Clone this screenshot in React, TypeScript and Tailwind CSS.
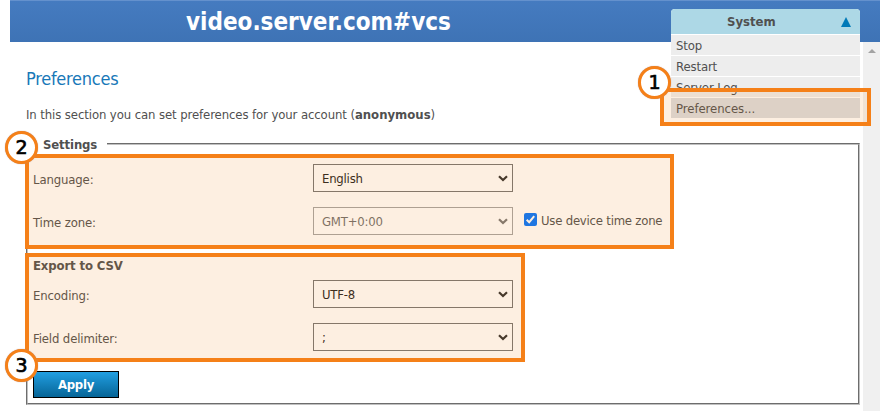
import React from "react";

function Arrow() {
  return (
    <svg className="mr-1 shrink-0" width="10" height="7" viewBox="0 0 10 7" fill="none">
      <path d="M1 1.2 L5 5 L9 1.2" stroke="#2f2f2f" strokeWidth="2.2" />
    </svg>
  );
}

function Select({ value, disabled }: { value: string; disabled?: boolean }) {
  return (
    <div
      className={`flex h-7 w-[200px] items-center justify-between border border-[#767676] bg-white pl-2 text-[#222] ${
        disabled ? "opacity-65" : ""
      }`}
    >
      <span className="pt-px tracking-[-0.22px]">{value}</span>
      <Arrow />
    </div>
  );
}

function Row({ label, children }: { label: string; children: React.ReactNode }) {
  return (
    <div className="flex h-7 items-center">
      <span className="w-[280px] pt-[3px]">{label}</span>
      {children}
    </div>
  );
}

function Badge({ n, place }: { n: string; place: string }) {
  return (
    <div
      className={`absolute flex size-[33px] items-center justify-center rounded-full border-[3px] border-[#f58018] bg-white font-['DejaVu_Sans',sans-serif] text-[19px] leading-none font-normal tracking-normal text-black shadow-[0_0_1px_#a88] [-webkit-text-stroke:0.7px_black] [font-stretch:normal] ${place}`}
    >
      {n}
    </div>
  );
}

const items = ["Stop", "Restart", "Server Log"];

export default function App() {
  return (
    <div className="relative flex h-[411px] w-[880px] flex-col overflow-hidden bg-white pl-[10px] font-['DejaVu_Sans_Condensed','DejaVu_Sans',sans-serif] text-[13px] leading-4 tracking-[-0.13px] text-[#505050] [font-stretch:condensed]">
      <header className="flex h-[42px] shrink-0 items-center border-t border-[#6491cd] bg-linear-to-b from-[#457bc0] to-[#3e73b5] pl-[176px]">
        <h1 className="text-[24px] leading-[42px] font-bold tracking-normal whitespace-nowrap text-white">video.server.com#vcs</h1>
      </header>

      <div className="flex min-h-0 flex-1">
        <main className="w-[853px] pl-4">
          <h2 className="pt-[25px] text-[18px] leading-6 tracking-[-0.25px] text-[#1878b8]">Preferences</h2>
          <p className="pt-4 tracking-[-0.1px] whitespace-nowrap">
            In this section you can set preferences for your account (<b className="tracking-normal">anonymous</b>)
          </p>
          <section className="mt-5 h-[262px] w-[834px] border border-t-[#6d6d6d] border-r-[#c0c0c0] border-b-[#c0c0c0] border-l-[#6d6d6d]">
            <div className="h-full border border-t-[#c0c0c0] border-r-[#6d6d6d] border-b-[#6d6d6d] border-l-[#c0c0c0] pl-[5px]">
              <h3 className="-mt-2 ml-1 h-4 w-[70px] bg-white pl-[6px] leading-4 font-bold">Settings</h3>
              <div className="flex flex-col gap-[15px] pt-[11px]">
                <Row label="Language:">
                  <Select value="English" />
                </Row>
                <Row label="Time zone:">
                  <Select value="GMT+0:00" disabled />
                  <span className="mb-[3px] ml-[11px] flex size-[13px] items-center justify-center rounded-[2px] bg-[#0075ff]">
                    <svg width="13" height="13" viewBox="0 0 13 13" fill="none">
                      <path d="M2.7 6.7 L5.2 9.2 L10.2 3.2" stroke="white" strokeWidth="2" />
                    </svg>
                  </span>
                  <span className="ml-1 tracking-[-0.22px] whitespace-nowrap">Use device time zone</span>
                </Row>
              </div>
              <h4 className="pt-[23px] leading-4 font-bold">Export to CSV</h4>
              <div className="flex flex-col gap-[15px] pt-[6px]">
                <Row label="Encoding:">
                  <Select value="UTF-8" />
                </Row>
                <Row label="Field delimiter:">
                  <Select value=";" />
                </Row>
              </div>
              <button className="mt-5 block h-[27px] w-[86px] border border-black bg-linear-to-b from-[#219fe2] to-[#066597] leading-none font-bold tracking-[-0.3px] text-white">
                Apply
              </button>
            </div>
          </section>
        </main>
        <div className="flex w-[17px] justify-center bg-[#f0f0f0] pt-[7px]">
          <svg width="8" height="4" viewBox="0 0 8 4">
            <path d="M0 4 L4 0 L8 4 Z" fill="#a3a3a3" />
          </svg>
        </div>
      </div>

      <nav className="absolute top-[9px] left-[671px] flex w-[189px] flex-col gap-px rounded-t-[4px] bg-white">
        <div className="flex h-[25px] items-center justify-between rounded-t-[4px] bg-[#add8e6] pr-[9px] pl-14 font-bold tracking-normal">
          System
          <svg width="10" height="10" viewBox="0 0 10 10">
            <path d="M0 10 L5 0 L10 10 Z" fill="#0079b8" />
          </svg>
        </div>
        {items.map((label) => (
          <div key={label} className="h-5 bg-[#ededed] pl-[5px] leading-[22px]">
            {label}
          </div>
        ))}
        <div className="h-5 bg-[#dbdde0] pl-[5px] leading-[22px] tracking-[-0.05px]">Preferences...</div>
      </nav>

      <div className="absolute top-[88px] left-[660px] h-[38px] w-[211px] border-4 border-[#f58018] bg-[#f08018]/13 bg-clip-padding" />
      <div className="absolute top-[154px] left-[25px] h-[95px] w-[649px] border-4 border-[#f58018] bg-[#f08018]/13 bg-clip-padding" />
      <div className="absolute top-[253px] left-[25px] h-[109px] w-[500px] border-4 border-[#f58018] bg-[#f08018]/13 bg-clip-padding" />
      <Badge n="1" place="top-[66px] left-[638px]" />
      <Badge n="2" place="top-[131px] left-[5px]" />
      <Badge n="3" place="top-[349px] left-[5px]" />
    </div>
  );
}
